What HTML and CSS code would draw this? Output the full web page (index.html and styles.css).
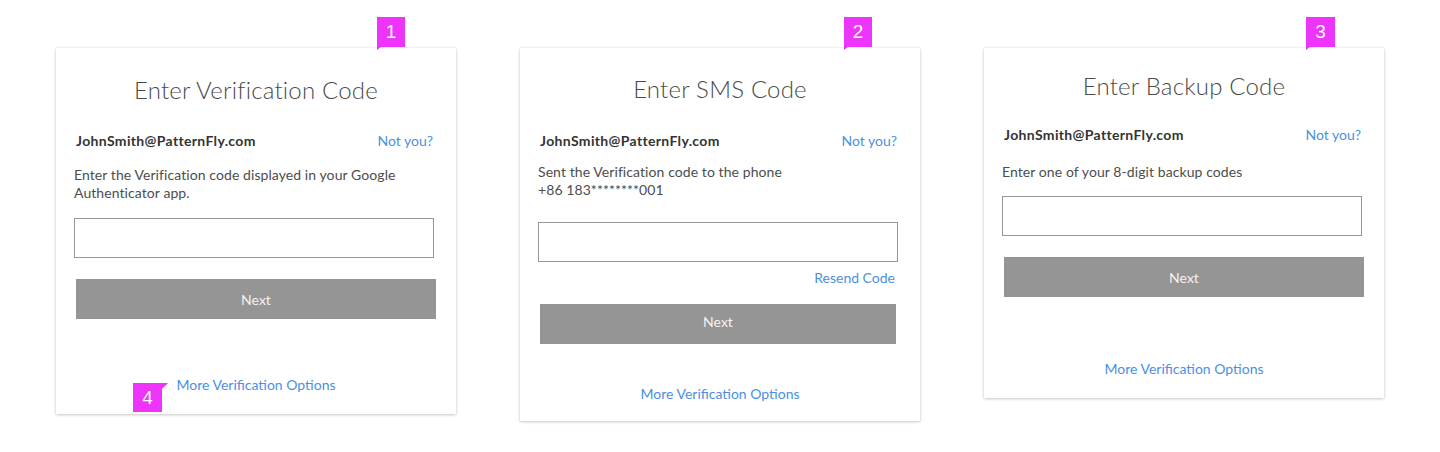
FILE: index.html
```html
<!DOCTYPE html>
<html lang="en">
<head>
<meta charset="utf-8">
<title>Verification screens</title>
<link rel="stylesheet" href="styles.css">
</head>
<body>
<main class="screens">
  <section class="card card-one">
    <span class="badge badge-top">1</span>
    <h1 class="title">Enter Verification Code</h1>
    <div class="user-row">
      <span class="email">JohnSmith@PatternFly.com</span>
      <a class="link">Not you?</a>
    </div>
    <p class="desc">Enter the Verification code displayed in your Google Authenticator app.</p>
    <div class="field"></div>
    <div class="btn">Next</div>
    <div class="more-wrap">
      <span class="badge badge-side">4</span>
      <a class="link more">More Verification Options</a>
    </div>
  </section>

  <section class="card card-two">
    <span class="badge badge-top">2</span>
    <h1 class="title">Enter SMS Code</h1>
    <div class="user-row">
      <span class="email">JohnSmith@PatternFly.com</span>
      <a class="link">Not you?</a>
    </div>
    <p class="desc">Sent the Verification code to the phone<br>+86 183********001</p>
    <div class="field"></div>
    <div class="resend"><a class="link">Resend Code</a></div>
    <div class="btn">Next</div>
    <div class="more-wrap">
      <a class="link more">More Verification Options</a>
    </div>
  </section>

  <section class="card card-three">
    <span class="badge badge-top">3</span>
    <h1 class="title">Enter Backup Code</h1>
    <div class="user-row">
      <span class="email">JohnSmith@PatternFly.com</span>
      <a class="link">Not you?</a>
    </div>
    <p class="desc">Enter one of your 8-digit backup codes</p>
    <div class="field"></div>
    <div class="btn">Next</div>
    <div class="more-wrap">
      <a class="link more">More Verification Options</a>
    </div>
  </section>
</main>
</body>
</html>
```

FILE: styles.css
```css
* { box-sizing: border-box; }

html, body {
  margin: 0;
  padding: 0;
  background: #ffffff;
}

body {
  font-family: Lato, "Open Sans", sans-serif;
  color: #4d4d4d;
  min-height: 452px;
}

.screens {
  display: flex;
  align-items: flex-start;
  gap: 64px;
  padding: 48px 0 0 56px;
}

.card {
  position: relative;
  width: 400px;
  background: #ffffff;
  box-shadow: 0 1px 3px rgba(0, 0, 0, 0.2), 0 0 2px rgba(0, 0, 0, 0.08);
  padding: 30px 22px 19px 18px;
  display: flex;
  flex-direction: column;
}

.title {
  margin: 0;
  font-size: 24px;
  line-height: 24px;
  font-weight: 300;
  color: #4a4a4a;
  text-align: center;
  letter-spacing: 0.2px;
  padding-left: 4px;
}

.user-row {
  display: flex;
  justify-content: space-between;
  align-items: baseline;
  margin-top: 29px;
  padding: 0 1px 0 2px;
  font-size: 14px;
  line-height: 20px;
}

.email {
  font-weight: 700;
  color: #333333;
  letter-spacing: 0.35px;
}

.link {
  color: #4a90e2;
  font-size: 14px;
  line-height: 20px;
  cursor: pointer;
}

.desc {
  margin: 15px 0 0 0;
  font-size: 14px;
  line-height: 18px;
  letter-spacing: 0.08px;
  color: #4d4d4d;
}

.field {
  margin-top: 16px;
  width: 360px;
  height: 40px;
  border: 1px solid #979797;
  background: #ffffff;
}

.btn {
  margin: 21px 0 0 2px;
  width: 360px;
  height: 40px;
  background: #959595;
  color: #f2f2f2;
  font-size: 14px;
  display: flex;
  align-items: center;
  justify-content: center;
}

.resend {
  display: flex;
  justify-content: flex-end;
  margin: 6px 3px 0 0;
  font-size: 14px;
  line-height: 20px;
}

.more-wrap {
  position: relative;
  display: flex;
  justify-content: center;
  margin-top: 56px;
  padding-left: 4px;
  font-size: 14px;
  line-height: 20px;
}

.more { display: block; }

/* per-screen vertical rhythm */
.card-two { padding-top: 29px; padding-bottom: 17px; }
.card-two .user-row { margin-top: 30px; }
.card-two .desc { margin-top: 12px; }
.card-two .field { margin-top: 23px; }
.card-two .btn { margin-top: 16px; width: 356px; padding-bottom: 6px; }
.card-two .more-wrap { margin-top: 40px; }

.card-three { padding-top: 26px; padding-bottom: 19px; }
.card-three .user-row { margin-top: 27px; }
.card-three .desc { margin-top: 18px; }
.card-three .field { margin-top: 15px; }
.card-three .btn { margin-top: 21px; }
.card-three .more-wrap { margin-top: 62px; }

/* annotation badges */
.badge {
  position: absolute;
  width: 28px;
  height: 30px;
  background: #ee33fa;
  color: #ffffff;
  font-family: "Liberation Sans", Arial, sans-serif;
  font-size: 19px;
  line-height: 30px;
  text-align: center;
}

.badge-top {
  top: -31px;
  left: 321px;
}

.card-two .badge-top { left: 324px; }
.card-three .badge-top { left: 322px; width: 29px; }

.badge-top::after {
  content: "";
  position: absolute;
  left: 0;
  bottom: -3px;
  border-top: 3px solid #ee33fa;
  border-right: 4px solid transparent;
}

.badge-side {
  left: 59px;
  top: 8px;
  width: 29px;
  height: 29px;
  line-height: 30px;
}

.badge-side::after {
  content: "";
  position: absolute;
  top: 0;
  right: -6px;
  border-top: 6px solid #ee33fa;
  border-right: 6px solid transparent;
}
```
